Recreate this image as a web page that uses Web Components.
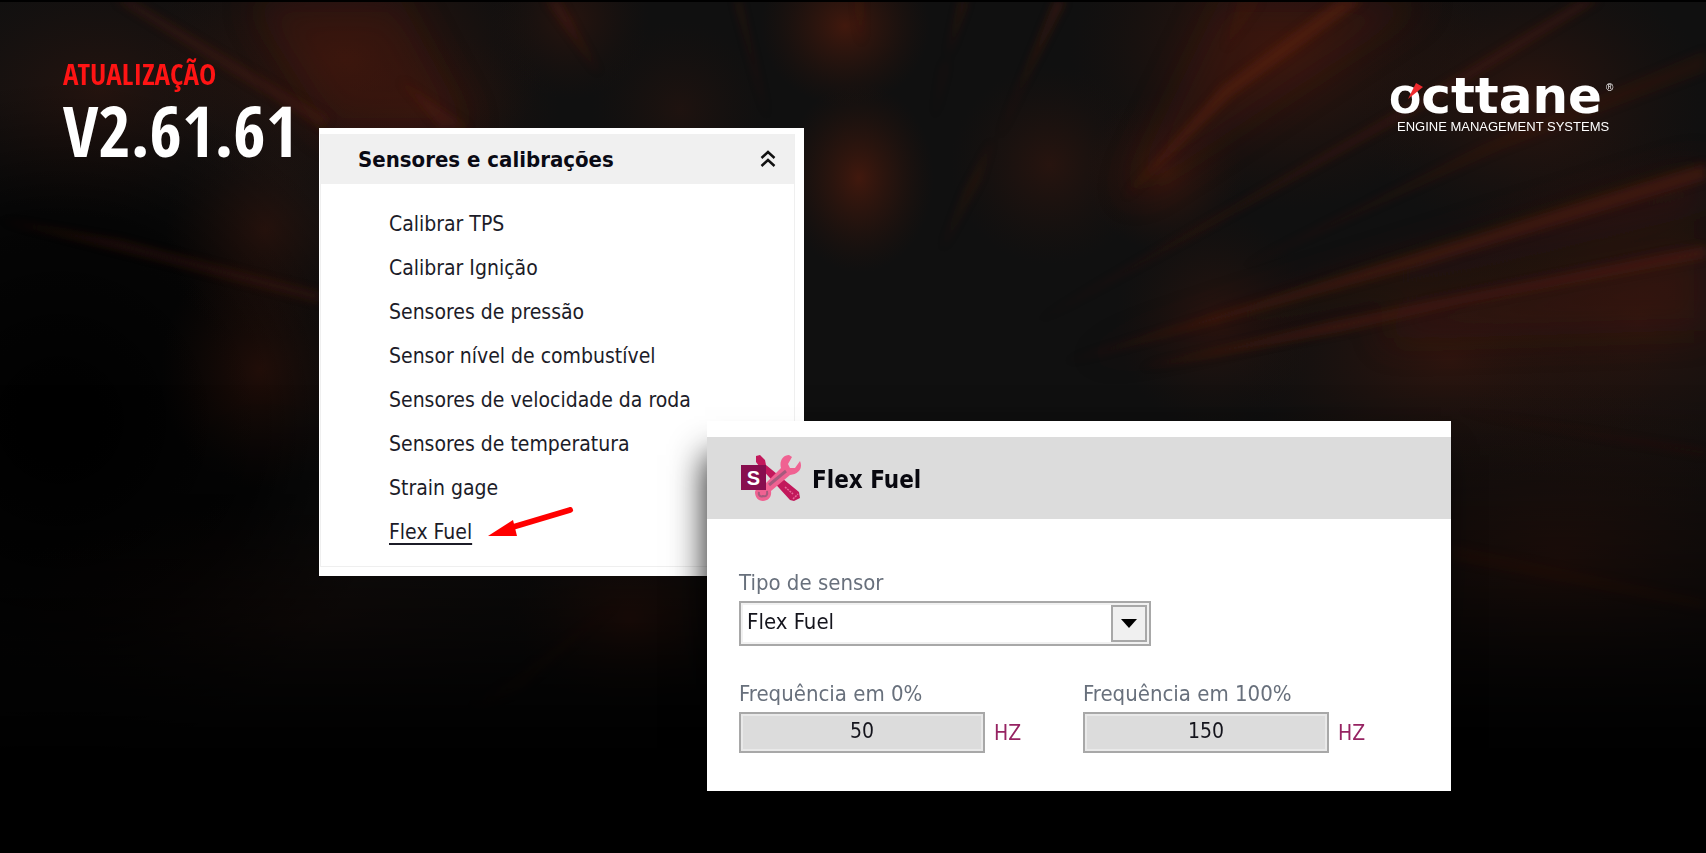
<!DOCTYPE html>
<html lang="pt-BR">
<head>
<meta charset="utf-8">
<meta name="viewport" content="width=device-width, initial-scale=1">
<title>Octtane – Atualização V2.61.61</title>
<style>
  html, body { margin: 0; background: #000; }
  body { font-family: "DejaVu Sans Condensed", "DejaVu Sans", sans-serif; }
</style>
</head>
<body>
<release-banner>
  <version-title slot="title" label="ATUALIZAÇÃO" version="V2.61.61"></version-title>
  <sensor-menu slot="menu" heading="Sensores e calibrações">
    <menu-link>Calibrar TPS</menu-link>
    <menu-link>Calibrar Ignição</menu-link>
    <menu-link>Sensores de pressão</menu-link>
    <menu-link>Sensor nível de combustível</menu-link>
    <menu-link>Sensores de velocidade da roda</menu-link>
    <menu-link>Sensores de temperatura</menu-link>
    <menu-link>Strain gage</menu-link>
    <menu-link current>Flex Fuel</menu-link>
  </sensor-menu>
  <settings-panel slot="panel" heading="Flex Fuel">
    <select-field label="Tipo de sensor" value="Flex Fuel"></select-field>
    <unit-field label="Frequência em 0%" value="50" unit="HZ"></unit-field>
    <unit-field label="Frequência em 100%" value="150" unit="HZ"></unit-field>
  </settings-panel>
  <brand-logo slot="brand"></brand-logo>
</release-banner>

<script>
class Base extends HTMLElement {
  connectedCallback() {
    if (this.shadowRoot) return;
    this.attachShadow({ mode: "open" }).innerHTML =
      "<style>*{box-sizing:border-box}</style>" + this.view();
  }
  attr(name) { return this.getAttribute(name) || ""; }
}

customElements.define("light-streaks", class extends Base {
  view() { return `
    <style>
      :host { display: block; background: #101010; }
      svg { display: block; width: 100%; height: 100%; }
    </style>
    <svg viewBox="0 0 1706 853" preserveAspectRatio="none" aria-hidden="true">
      <defs>
        <radialGradient id="g"><stop offset="0" stop-color="#4a1a0d"/><stop offset=".5" stop-color="#3c170c" stop-opacity=".5"/><stop offset="1" stop-color="#2a120a" stop-opacity="0"/></radialGradient>
        <radialGradient id="k"><stop offset="0" stop-color="#000"/><stop offset=".6" stop-color="#000" stop-opacity=".7"/><stop offset="1" stop-color="#000" stop-opacity="0"/></radialGradient>
        <linearGradient id="d" x2="0" y2="1"><stop offset=".45" stop-color="#000" stop-opacity="0"/><stop offset=".68" stop-color="#000" stop-opacity=".45"/><stop offset=".9" stop-color="#000"/></linearGradient>
        <filter id="b4" x="-20%" y="-20%" width="140%" height="140%"><feGaussianBlur stdDeviation="4"/></filter>
        <filter id="b18" x="-30%" y="-30%" width="160%" height="160%"><feGaussianBlur stdDeviation="18"/></filter>
      </defs>
      <ellipse cx="60" cy="420" rx="340" ry="340" fill="url(#k)"/>
      <g fill="url(#g)">
        <ellipse cx="345" cy="60" rx="200" ry="140" opacity=".65"/>
        <ellipse cx="420" cy="110" rx="140" ry="80" opacity=".4"/>
        <ellipse cx="570" cy="20" rx="80" ry="80" opacity=".4"/>
        <ellipse cx="680" cy="110" rx="90" ry="90" opacity=".25"/>
        <ellipse cx="845" cy="26" rx="85" ry="80" opacity=".85"/>
        <ellipse cx="859" cy="178" rx="75" ry="95" opacity=".85"/>
        <ellipse cx="1050" cy="165" rx="100" ry="100" opacity=".4"/>
        <ellipse cx="1165" cy="172" rx="80" ry="80" opacity=".65"/>
        <ellipse cx="1280" cy="50" rx="210" ry="160" opacity=".65"/>
        <ellipse cx="1530" cy="100" rx="180" ry="140" opacity=".5"/>
        <ellipse cx="1215" cy="320" rx="100" ry="110" opacity=".4"/>
        <ellipse cx="1450" cy="360" rx="220" ry="130" opacity=".5"/>
        <ellipse cx="1640" cy="320" rx="200" ry="200" opacity=".4"/>
        <ellipse cx="1560" cy="560" rx="280" ry="180" opacity=".45"/>
        <ellipse cx="265" cy="230" rx="100" ry="110" opacity=".4"/>
        <ellipse cx="260" cy="370" rx="100" ry="120" opacity=".4"/>
        <ellipse cx="630" cy="620" rx="120" ry="90" opacity=".6"/>
        <ellipse cx="300" cy="620" rx="320" ry="120" opacity=".2"/>
        <ellipse cx="100" cy="90" rx="190" ry="130" opacity=".35"/>
      </g>
      <g fill="#45190c" filter="url(#b18)" opacity=".42">
        <path d="M1220 0H1430L1125 200Z"/>
        <path d="M250 0H400L470 130H330Z"/>
        <path d="M1706 165V210L1075 362Z"/>
        <path d="M1706 240V330L1380 340L1400 308Z"/>
      </g>
      <g fill="#5c200e" filter="url(#b4)" opacity=".55">
        <path d="M1338 0H1364L1232 96L1124 198L1222 86Z"/>
        <path d="M1238 0H1262L1225 50Z" opacity=".3"/>
        <path d="M1580 0H1600L1440 98L1036 322L1430 92Z" opacity=".6"/>
        <path d="M1706 50V72L1500 150L1240 268L1480 146Z" opacity=".35"/>
        <path d="M1706 163V180L1420 266L1065 362L1400 258Z" opacity=".85"/>
        <path d="M1706 246V258L1460 304L1340 332L1140 368L1330 322Z" opacity=".85"/>
        <path d="M1055 0H1066L1020 90L998 140Z" opacity=".8"/>
        <path d="M960 0H968L943 70L934 120Z" opacity=".6"/>
        <path d="M992 140L980 180L942 250L965 190Z" opacity=".4"/>
        <path d="M856 0H862V45Z" opacity=".6"/>
        <path d="M735 0H740L768 120Z" opacity=".6"/>
        <path d="M545 0H560L600 75Z" opacity=".6"/>
        <path d="M115 0H132L330 118L322 128L230 72Z" opacity=".55"/>
        <path d="M400 80L470 128H440Z" opacity=".6"/>
        <path d="M0 220L120 240L320 292V303L180 266Z" opacity=".5"/>
        <path d="M1451 545L1706 600V610L1451 560Z" opacity=".35"/>
        <path d="M1451 410L1706 450V456Z" opacity=".35"/>
        <path d="M620 600L520 690L470 710Z" opacity=".3"/>
      </g>
      <rect width="1706" height="853" fill="url(#d)"/>
      <rect width="1706" height="2"/>
    </svg>`; }
});

customElements.define("release-banner", class extends Base {
  view() { return `
    <style>
      :host { display: grid; min-height: 100vh; overflow: hidden;
        grid-template-columns: 63fr 256fr 388fr 97fr 585fr 62fr 171fr 84fr; }
      light-streaks { grid-area: 1 / 1 / 2 / -1; min-width: 0; }
      ::slotted(*) { align-self: start; min-width: 0; z-index: 1; }
      ::slotted([slot=title]) { grid-area: 1 / 2 / 2 / 3; margin-top: 50px; }
      ::slotted([slot=menu])  { grid-area: 1 / 3 / 2 / 5; margin-top: 128px; }
      ::slotted([slot=panel]) { grid-area: 1 / 4 / 2 / 7; margin: 421px 0 60px; z-index: 2; }
      ::slotted([slot=brand]) { grid-area: 1 / 6 / 2 / 9; margin-top: 76px; justify-self: start; }
    </style>
    <light-streaks></light-streaks>
    <slot name="title"></slot><slot name="menu"></slot><slot name="panel"></slot><slot name="brand"></slot>`; }
});

customElements.define("version-title", class extends Base {
  view() { return `
    <style>
      :host { display: block; font-family: "Open Sans Condensed", "Roboto Condensed", sans-serif; font-weight: 700; white-space: nowrap; }
      h1 { margin: 0; font: inherit; }
      span { display: block; }
      .label { color: #ff1414; font-size: 29px; line-height: 48px; }
      .version { color: #fff; font-size: 70px; line-height: 64px; }
    </style>
    <h1><span class="label">${this.attr("label")}</span><span class="version">${this.attr("version")}</span></h1>`; }
});

customElements.define("brand-logo", class extends Base {
  view() { return `
    <style>
      :host { display: grid; grid-template-columns: auto auto; color: #fff; column-gap: 4px; }
      .name { position: relative; font-weight: 700; font-size: 50px; line-height: 40px; font-family: "DejaVu Sans", sans-serif; }
      .cap { font-size: 38px; }
      .name svg { position: absolute; left: 18px; top: 6px; width: 18px; height: 18px; }
      .mark { padding-top: 6px; font: 10px/12px "Liberation Sans", sans-serif; }
      .tag { grid-column: 1 / -1; padding-left: 8px; font: 13px/14px "Liberation Sans", sans-serif; }
    </style>
    <div class="name"><span class="cap">O</span>cttane<svg viewBox="0 0 18 18" aria-hidden="true"><path d="M1 17L9 1L16 5Z" fill="#ee2a2e"/></svg></div>
    <div class="mark">®</div>
    <div class="tag">ENGINE MANAGEMENT SYSTEMS</div>`; }
});

customElements.define("sensor-menu", class extends Base {
  view() { return `
    <style>
      :host { display: block; background: #fff; padding: 6px 9px 9px 1px; }
      .box { border: 1px solid #efefef; border-top: 0; padding-bottom: 12px; }
      header { display: flex; align-items: center; justify-content: space-between; height: 50px; padding: 2px 18px 0 37px; background: #f0f0f0; }
      h2 { margin: 0; font-size: 22px; line-height: 28px; color: #0a0a14; white-space: nowrap; }
      button { display: grid; place-items: center; padding: 0; border: 0; background: none; }
      svg { display: block; }
      nav { padding: 18px 0 0 68px; }
    </style>
    <div class="box">
      <header>
        <h2>${this.attr("heading")}</h2>
        <button type="button" aria-label="Recolher" aria-expanded="true">
          <svg width="16" height="20" viewBox="0 0 16 20" fill="none" stroke="#111" stroke-width="2.4"><path d="M1.500 8L8 2L14.500 8M1.500 16L8 10L14.500 16"/></svg>
        </button>
      </header>
      <nav><slot></slot></nav>
    </div>`; }
});

customElements.define("menu-link", class extends Base {
  view() {
    const on = this.hasAttribute("current");
    return `
    <style>
      :host { display: flex; align-items: center; gap: 16px; height: 44px; font-size: 21px; line-height: 28px; white-space: nowrap; }
      a { color: #1c1c28; text-decoration: none; }
      a[aria-current] { text-decoration: underline; text-decoration-thickness: 2px; text-underline-offset: 4px; }
      svg { display: block; margin-bottom: 20px; }
    </style>
    <a href="#"${on ? ' aria-current="page"' : ""}><slot></slot></a>
    ${on ? '<svg width="86" height="30" viewBox="0 0 86 30" aria-hidden="true"><path d="M25 20L82 3" stroke="#f00" stroke-width="6" stroke-linecap="round"/><path d="M0 29L25 13L29 29Z" fill="#f00"/></svg>' : ""}`;
  }
});

customElements.define("settings-panel", class extends Base {
  view() { return `
    <style>
      :host { display: block; background: #fff; padding: 16px 0 38px; box-shadow: -6px 30px 32px -4px rgba(0,0,0,.85); }
      header { display: flex; align-items: center; gap: 10px; height: 82px; padding-left: 33px; background: #dcdcdc; }
      h2 { margin: 0; padding-top: 3px; font-size: 24px; line-height: 30px; color: #08080f; }
      svg { display: block; }
      form { display: grid; grid-template-columns: 344px 344px; row-gap: 34px; padding: 50px 0 0 32px; }
      ::slotted(select-field) { grid-column: 1 / -1; }
    </style>
    <header>
      <svg width="62" height="50" viewBox="0 0 62 50" aria-hidden="true">
        <path d="M16 3L20 2L25 7L26 12L59 39L60 45L54 48L50 47L19 13L16 9Z" fill="#c2185b"/>
        <path d="M45 34L53 41M53 46L58 41" stroke="#e76a9a" stroke-width="1.500" stroke-dasharray="2 1"/>
        <path d="M49 2L52 4L48 11L50 15L55 15L60 8C63 15 59 21 50 22L31 38C32 44 28 48 23 48C18 48 15 44 15 39L17 33L25 31L41 15C39 8 43 2 49 2Z" fill="#f06292"/>
        <path d="M29 32L46 18" stroke="#a65a7d" stroke-width="3"/>
        <path d="M19 39C18 43 21 44 23 43C26 44 28 42 27 38" fill="none" stroke="#a65a7d" stroke-width="2"/>
        <rect x="1" y="12" width="25" height="25" fill="#880e4f"/>
        <text x="13.500" y="32" text-anchor="middle" font-family="Liberation Sans, sans-serif" font-weight="700" font-size="20" fill="#fff">S</text>
      </svg>
      <h2>${this.attr("heading")}</h2>
    </header>
    <form><slot></slot></form>`; }
});

const fieldCss = `
  :host { display: block; min-width: 0; font-size: 22px; }
  label { display: block; line-height: 28px; color: #68707c; white-space: nowrap; }
  select, input { font: inherit; color: #14141c; margin: 0; border-radius: 0; }`;

customElements.define("select-field", class extends Base {
  view() { return `
    <style>${fieldCss}
      .wrap { display: grid; grid-template-columns: 1fr 36px; align-items: center; width: 412px; max-width: 95%; height: 45px; margin-top: 4px; padding-right: 2px; border: 2px solid #a8a8a8; box-shadow: inset 0 0 0 2px #f1f1f1; }
      select { grid-area: 1 / 1 / 2 / 3; width: 100%; height: 41px; appearance: none; border: 0; background: none; padding: 0 0 4px 6px; font-size: 22px; }
      .arrow { grid-area: 1 / 2; display: grid; place-items: center; height: 37px; border: 2px solid #a8a8a8; background: #f0f0f0; pointer-events: none; }
    </style>
    <label for="f">${this.attr("label")}</label>
    <div class="wrap">
      <select id="f"><option>${this.attr("value")}</option></select>
      <span class="arrow"><svg width="16" height="9" viewBox="0 0 16 9" aria-hidden="true"><path d="M0 0H16L8 9Z"/></svg></span>
    </div>`; }
});

customElements.define("unit-field", class extends Base {
  view() { return `
    <style>${fieldCss}
      .row { display: flex; align-items: center; gap: 9px; margin-top: 4px; }
      input { width: 246px; height: 41px; padding: 0 0 3px; text-align: center; border: 2px solid #a8a8a8; background: #dcdcdc; box-shadow: inset 0 0 0 2px #e9e9e9; font-size: 21px; }
      span { color: #962362; font-size: 21px; }
    </style>
    <label for="f">${this.attr("label")}</label>
    <div class="row"><input id="f" type="text" inputmode="numeric" value="${this.attr("value")}" aria-describedby="u"><span id="u">${this.attr("unit")}</span></div>`; }
});
</script>
</body>
</html>
